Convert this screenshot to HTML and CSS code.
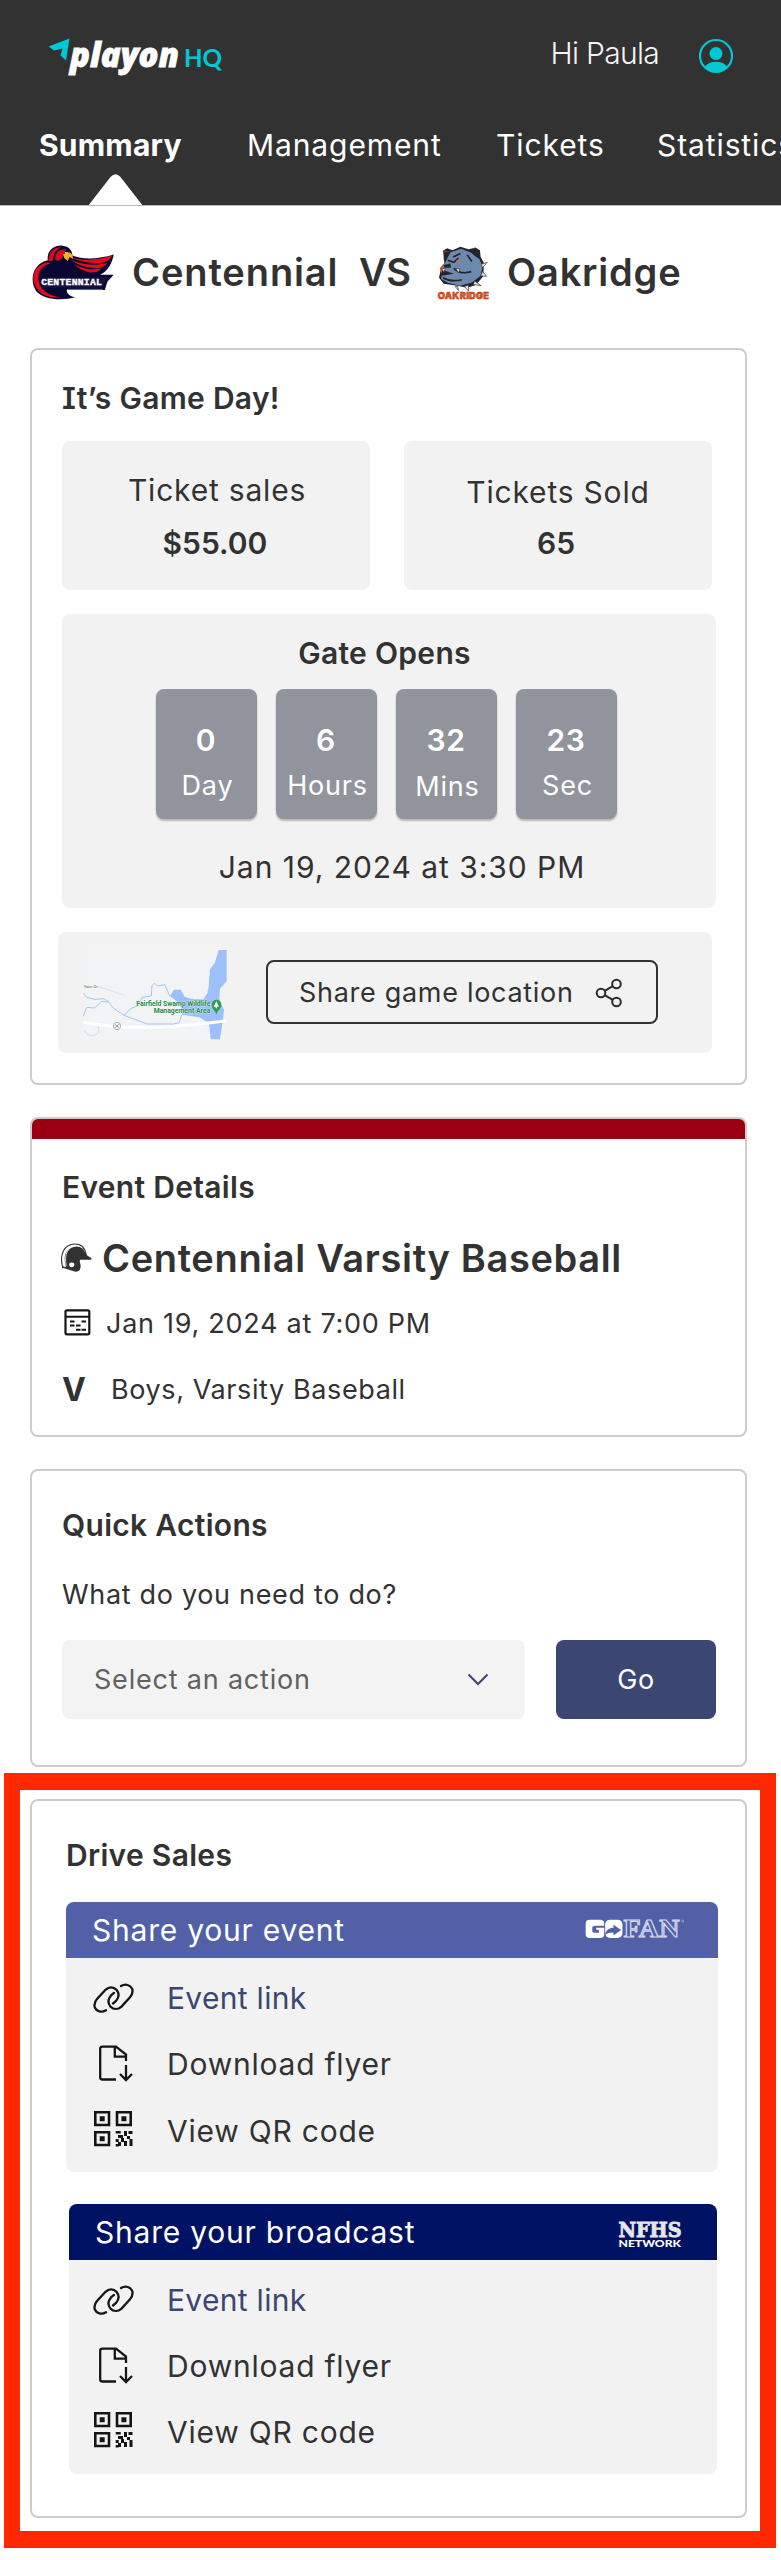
FILE: index.html
```html
<!DOCTYPE html>
<html lang="en">
<head>
<meta charset="utf-8">
<title>PlayOn HQ - Summary</title>
<link rel="stylesheet" href="styles.css">
</head>
<body>
<svg class="defs" aria-hidden="true">
  <symbol id="i-link" viewBox="0 0 41 30">
    <g fill="none" stroke="#151515" stroke-width="2.3" stroke-linecap="round">
      <path d="M13 27.3C8.5 30 3.5 28.500 1.800 24.500C.8 21 2.200 18 4.200 15.800L12.500 6.800C16 3.600 20.500 3.800 23.500 6.800C26.500 10.500 26 14.500 23 18L20 20.500"/>
      <path d="M13 27.3C8.5 30 3.5 28.500 1.800 24.500C.8 21 2.200 18 4.200 15.800L12.500 6.800C16 3.600 20.500 3.800 23.500 6.800C26.500 10.500 26 14.500 23 18L20 20.500" transform="rotate(180 20.5 15.2)"/>
    </g>
  </symbol>
  <symbol id="i-file" viewBox="0 0 36 37">
    <path d="M18 34.500H4.500Q2.200 34.500 2.200 32.500V3.500Q2.200 1.600 4.500 1.600H18L28 9.500V16M16.800 1.600V11.700H28M28 20V34.500M22 29L28 35L34 29" fill="none" stroke="#151515" stroke-width="2.300"/>
  </symbol>
  <symbol id="i-qr" viewBox="0 0 39 36">
    <g fill="none" stroke="#151515" stroke-width="2.600">
      <path d="M1.300 1.300h13.700v12.700H1.300zM23 1.300h13.700v12.700H23zM1.300 21.300h13.700v12.700H1.300z"/>
    </g>
    <path fill="#151515" d="M5.700 5.200h5v5h-5zM27.400 5.200h5v5h-5zM5.700 25.200h5v5h-5zM21.700 20h5v2.500h-5zM30 20h3v5h-3zM34.500 20h4v3h-4zM24 24h5v3h-5zM33 25h3v3h-3zM21.700 28h3v3h-3zM27 27h3v4h-3zM35.500 28h3v7h-3zM24 31h3v4h-3zM21.700 33h3v2.500h-3zM30 30h3v5h-3z"/>
  </symbol>
</svg>

<header class="header">
  <div class="topbar">
    <svg class="logo" viewBox="48 36 176 44">
      <path d="M48.500 46.500L69.500 38.500L66 60.500L60.500 55.500L62.500 48.500L54 50.500Z" fill="#00c8d4"/>
      <text x="70" y="66.500" class="logo-name" textLength="109" lengthAdjust="spacingAndGlyphs">playon</text>
      <text x="184" y="66.500" class="logo-hq" textLength="38" lengthAdjust="spacingAndGlyphs">HQ</text>
    </svg>
    <span class="greeting">Hi Paula</span>
    <svg class="avatar" viewBox="0 0 36 36">
      <circle cx="18" cy="18" r="16" fill="none" stroke="#00c8d4" stroke-width="2.200"/>
      <circle cx="18" cy="15.500" r="6.500" fill="#00c8d4"/>
      <path d="M6.500 29C9 25.500 13 23.800 18 23.800S27 25.500 29.500 29C26 32.500 22 34 18 34S10 32.500 6.500 29Z" fill="#00c8d4"/>
    </svg>
  </div>
  <nav class="nav">
    <a class="tab tab-active">Summary</a>
    <a class="tab tab-mgmt">Management</a>
    <a class="tab tab-tick">Tickets</a>
    <a class="tab">Statistics</a>
  </nav>
  <svg class="pointer" viewBox="0 0 56 32"><path d="M0 32L22.500 3Q27.500-2.500 32.500 3L55 32Z" fill="#fff"/></svg>
</header>

<div class="matchup">
  <svg class="team-a" viewBox="33 44 250 166">
    <path d="M82 90C78 64 98 44 126 46C146 48 156 60 156 76C190 90 240 86 281 73C276 100 262 124 240 134L281 134L262 154L254 180L140 178C136 188 148 200 166 202C120 214 66 208 46 182C26 150 36 100 82 90Z" fill="#0a0632"/>
    <path d="M84 92C84 66 100 50 124 51C104 58 100 72 96 92ZM104 88C104 68 114 58 136 56L126 84L112 92Z" fill="#d60a1e"/>
    <path d="M152 82C196 94 240 88 276 76C270 88 262 94 246 98C216 100 182 96 152 82ZM152 88C180 104 220 108 262 98C250 112 240 114 224 114C196 112 168 104 152 88ZM158 98C180 114 210 122 244 114C236 124 226 128 212 127C190 122 172 114 158 98Z" fill="#e00b1c"/>
    <path d="M82 96C40 104 28 142 48 174C62 198 92 206 122 202C88 198 66 184 58 164C46 134 58 108 90 100Z" fill="#e00b1c"/>
    <path d="M128 72L142 66Q158 66 158 86L148 80L142 92L132 84Z" fill="#f7b021"/>
    <path d="M132 64l12 4-8 2z" fill="#fff"/>
    <path d="M60 142H262L256 152L248 172H66Z" fill="#17143f"/>
    <path d="M150 178H248" stroke="#5a6798" stroke-width="3"/>
    <text x="62" y="166" class="crest-a" textLength="184" lengthAdjust="spacingAndGlyphs">CENTENNIAL</text>
  </svg>
  <span class="team team-home">Centennial</span>
  <span class="team vs">VS</span>
  <svg class="team-b" viewBox="1250 46 158 160">
    <path d="M1268 60L1280 52L1296 58L1320 48L1346 56L1364 50L1378 58L1380 78L1390 96L1388 136L1366 162L1340 170L1310 164L1270 158L1256 140L1262 112L1272 96Z" fill="#22242c"/>
    <path d="M1272 62L1290 60L1272 80ZM1348 54L1362 52L1374 66L1362 64ZM1258 112L1268 100L1264 128Z" fill="#e8511a"/>
    <path d="M1290 64L1322 54L1352 66L1376 84L1386 106L1380 134L1354 154L1318 164L1284 156L1262 144L1264 134L1300 128L1276 120L1264 112L1276 92Z" fill="#6d89ad"/>
    <path d="M1282 88L1300 94L1314 82M1298 78L1320 68M1300 112Q1320 132 1352 122M1268 140Q1290 154 1324 146M1340 72L1354 92" fill="none" stroke="#22242c" stroke-width="5"/>
    <path d="M1344 56L1366 52L1378 62L1374 82L1360 72ZM1272 64L1292 60L1284 74L1270 88Z" fill="#22242c"/>
    <path d="M1270 102L1290 98L1292 110L1272 110Z" fill="#2a2525"/>
    <path d="M1306 88l12-3-3 8z" fill="#f36a1c"/>
    <path d="M1264 112l6 12 5-11zM1306 112l8 14 4-12zM1382 100L1400 94L1386 110ZM1386 122L1398 136L1380 134ZM1362 150L1382 164L1358 160ZM1344 162L1344 180L1332 166ZM1312 166L1314 178L1304 166Z" fill="#e5e7ea" stroke="#33353b" stroke-width="2"/>
    <text x="1252" y="203" class="crest-b" textLength="154" lengthAdjust="spacingAndGlyphs">OAKRIDGE</text>
  </svg>
  <span class="team team-away">Oakridge</span>
</div>

<section class="card game-day">
  <h2 class="h2 cv">It’s Game Day!</h2>
  <div class="stats">
    <div class="stat"><p class="t30">Ticket sales</p><p class="t30 strong">$55.00</p></div>
    <div class="stat stat-low"><p class="t30">Tickets Sold</p><p class="t30 strong">65</p></div>
  </div>
  <div class="gate">
    <h2 class="h2">Gate Opens</h2>
    <div class="tiles">
      <div class="tile"><b>0</b><span>Day</span></div>
      <div class="tile"><b>6</b><span>Hours</span></div>
      <div class="tile tile-low"><b>32</b><span>Mins</span></div>
      <div class="tile"><b>23</b><span>Sec</span></div>
    </div>
    <p class="t30 gate-date">Jan 19, 2024 at 3:30 PM</p>
  </div>
  <div class="location">
    <svg class="map" viewBox="70 60 430 270">
      <path d="M70 60H500V330H70Z" fill="#f1f3f4"/>
      <path d="M476 60H500V154L480 176L478 208L492 240L489 270L480 328H452L447 280L418 262L368 254L360 222L330 198L342 179H362L374 200L392 206L430 208L442 190L446 170L450 118L464 100Z" fill="#9dc0fa"/>
      <path d="M70 190L80 202L104 208L132 206L144 214L160 234L192 256L262 282H340L358 278L364 256L376 246M70 258L80 232L104 234L124 214L146 216M192 256L212 236L236 226L246 202L274 198L276 166L284 160L292 168L314 164L330 200" fill="none" stroke="#a4c4f8" stroke-width="3"/>
      <path d="M116 170L194 196" stroke="#e4e4e6" stroke-width="4"/>
      <path d="M72 300L82 314L102 318L116 308V288" fill="none" stroke="#dedee0" stroke-width="3"/>
      <path d="M70 277Q170 296 290 292Q400 286 500 272" fill="none" stroke="#fff" stroke-width="9"/>
      <circle cx="171" cy="288" r="11" fill="#f5f6f6" stroke="#8c9196" stroke-width="2"/>
      <path d="M165 283l12 10m0-10l-12 10" stroke="#6f7479" stroke-width="2"/>
      <text x="71" y="175" class="map-road" textLength="43" lengthAdjust="spacingAndGlyphs">Yarn Dr</text>
      <text x="229" y="228" class="map-area" textLength="222" lengthAdjust="spacingAndGlyphs">Fairfield Swamp Wildlife</text>
      <text x="281" y="248" class="map-area" textLength="170" lengthAdjust="spacingAndGlyphs">Management Area</text>
      <path d="M469 253C466 240 455 238 455 224A14.500 14.500 0 0 1 484 224C484 238 472 240 469 253Z" fill="#2f9e50"/>
      <path d="M469 214L477 230H471V235H467V230H461Z" fill="#fff"/>
    </svg>
    <button class="share-btn">Share game location
      <svg class="share-icon" viewBox="0 0 26 30"><g fill="none" stroke="#2b2b2b" stroke-width="2"><circle cx="20.500" cy="6" r="4.300"/><circle cx="5" cy="15" r="4.300"/><circle cx="20.500" cy="24" r="4.300"/><path d="M8.700 12.800L16.800 8.200M8.700 17.200L16.800 21.800"/></g></svg>
    </button>
  </div>
</section>

<section class="card details">
  <div class="bar"></div>
  <h2 class="h2">Event Details</h2>
  <div class="row title-row">
    <svg class="helmet" viewBox="20 24 93 92">
      <path d="M25 102C12 58 30 27 62 27C84 27 94 42 96 62" fill="none" stroke="#323232" stroke-width="3.500"/>
      <path d="M34 98C32 86 29 76 31 64C36 36 70 26 86 42C93 50 92 62 112 70V75H78C74 82 80 88 79 98C78 110 68 114 58 111L22 99L24 95Z" fill="#323232"/>
      <ellipse cx="52" cy="91" rx="8" ry="7" fill="#fff"/>
      <path d="M35 94C28 60 38 36 66 32" fill="none" stroke="#fff" stroke-width="2.500"/>
    </svg>
    <h1 class="event-title">Centennial Varsity Baseball</h1>
  </div>
  <div class="row date-row">
    <svg class="calendar" viewBox="0 0 27 27"><rect x="1.500" y="1.300" width="23.800" height="24" rx="1.500" fill="none" stroke="#151515" stroke-width="2.200"/><path d="M1.500 7.800H25.300M6 12.500h4.500M17.500 12.500h4.500M6 16.500h4.500M12 16.500h4.500M12 20.800h4.500M17.500 20.800h4.500" stroke="#151515" stroke-width="2"/></svg>
    <span>Jan 19, 2024 at 7:00 PM</span>
  </div>
  <div class="row level-row"><b class="level">V</b><span>Boys, Varsity Baseball</span></div>
</section>

<section class="card quick">
  <h2 class="h2">Quick Actions</h2>
  <p class="prompt">What do you need to do?</p>
  <div class="controls">
    <div class="select">Select an action<svg class="chevron" viewBox="0 0 22 13"><path d="M1.500 1.500L11 11L20.500 1.500" fill="none" stroke="#3c4672" stroke-width="2"/></svg></div>
    <button class="go">Go</button>
  </div>
</section>

<div class="highlight">
  <section class="card sales">
    <h2 class="h2">Drive Sales</h2>
    <div class="panel">
      <div class="panel-head gofan-head"><span>Share your event</span>
        <svg class="gofan" viewBox="14 58 302 60">
          <rect x="16" y="60" width="56" height="55" rx="12" fill="#fff"/>
          <path d="M74 78H46Q36 78 36 84V94Q36 99 42 99H56V90H48V84H74Z" fill="#5261a7"/>
          <rect x="75" y="60" width="52" height="55" rx="14" fill="#fff"/>
          <path d="M73 106Q80 84 100 84V75L123 91L100 108V99Q86 98 73 106Z" fill="#5261a7"/>
          <text x="130" y="113" class="fan" textLength="170" lengthAdjust="spacingAndGlyphs">FAN</text>
          <circle cx="309" cy="64" r="3" fill="none" stroke="#c9cfe8" stroke-width="1.500"/>
        </svg>
      </div>
      <div class="item"><svg class="i-link"><use href="#i-link"/></svg><a class="link">Event link</a></div>
      <div class="item item-file"><svg class="i-file"><use href="#i-file"/></svg><span>Download flyer</span></div>
      <div class="item item-qr"><svg class="i-qr"><use href="#i-qr"/></svg><span>View QR code</span></div>
    </div>
    <div class="panel panel-b">
      <div class="panel-head nfhs-head"><span>Share your broadcast</span>
        <svg class="nfhs" viewBox="0 0 64 26">
          <text x="0.500" y="15" class="nfhs-a" textLength="63" lengthAdjust="spacingAndGlyphs">NFHS</text>
          <text x="0.500" y="25" class="nfhs-b" textLength="62.500" lengthAdjust="spacingAndGlyphs">NETWORK</text>
        </svg>
      </div>
      <div class="item"><svg class="i-link"><use href="#i-link"/></svg><a class="link">Event link</a></div>
      <div class="item item-file"><svg class="i-file"><use href="#i-file"/></svg><span>Download flyer</span></div>
      <div class="item item-qr"><svg class="i-qr"><use href="#i-qr"/></svg><span>View QR code</span></div>
    </div>
  </section>
</div>
</body>
</html>
```
FILE: styles.css
```css
* { box-sizing: border-box; margin: 0; padding: 0; }
html { overflow: hidden; }
body {
  width: 781px; height: 2560px; overflow: hidden; background: #fff; color: #323232;
  font: 400 27px/32px Inter, "Liberation Sans", sans-serif; letter-spacing: .7px;
}
svg { display: block; flex: none; overflow: visible; }
.defs { position: absolute; width: 0; height: 0; overflow: hidden; }
button { font: inherit; letter-spacing: inherit; color: inherit; }

.header { position: relative; height: 206px; background: #323232; color: #fff; border-bottom: 1px solid #b9b9b9; overflow: hidden; }
.topbar { display: flex; align-items: flex-start; height: 127px; padding: 35px 48px 0; }
.logo { width: 176px; height: 44px; margin-top: 1px; }
.logo-name { font: italic 800 34px "Open Sans", sans-serif; letter-spacing: 0; fill: #fff; stroke: #fff; stroke-width: .8px; }
.logo-hq { font: 700 25px Lato, sans-serif; letter-spacing: 0; fill: #00c8d4; }
.greeting { margin-left: auto; font-size: 30px; line-height: 36px; font-weight: 300; letter-spacing: -.7px; color: #f4f4f4; }
.avatar { width: 36px; height: 36px; margin: 3px -1px 0 39px; }
.nav { display: flex; padding-left: 39px; font-size: 30px; line-height: 36px; letter-spacing: .9px; white-space: nowrap; }
.tab { flex: none; }
.tab-active { width: 208px; font-weight: 700; letter-spacing: .2px; }
.tab-mgmt { width: 249px; }
.tab-tick { width: 161px; }
.pointer { position: absolute; left: 88px; top: 174px; width: 56px; height: 32px; }

.matchup { display: flex; align-items: center; height: 142px; padding: 0 0 10px 31px; }
.team-a { width: 84px; height: 55px; margin-bottom: -1px; }
.team { font-size: 38px; line-height: 46px; font-weight: 600; letter-spacing: .9px; }
.team-home { margin-left: 17px; width: 227px; }
.vs { letter-spacing: -.5px; width: 78px; }
.team-b { width: 53px; height: 54px; margin-bottom: -1px; }
.team-away { margin-left: 17px; letter-spacing: .8px; }
.crest-a { font: 700 28px "Liberation Mono", monospace; fill: #fff; stroke: #fff; }
.crest-b { font: 900 26px Inter, sans-serif; fill: #f4511c; stroke: #8a2b0a; stroke-width: 1px; }

.card { width: 717px; margin-left: 30px; border: 2px solid #ccc; border-radius: 8px; padding: 0 29px; background: #fff; overflow: hidden; }
.h2 { padding-left: 1px; font-size: 30px; line-height: 36px; font-weight: 600; letter-spacing: .3px; white-space: nowrap; }
.cv { letter-spacing: .3px; font-feature-settings: "cv08"; }
.t30 { font-size: 30px; line-height: 36px; letter-spacing: .8px; white-space: nowrap; }
.strong { font-weight: 600; letter-spacing: 0; }

.game-day { height: 737px; padding-top: 30px; }
.stats { display: flex; gap: 34px; margin: 25px 0 0 1px; }
.stat { width: 308px; height: 149px; padding: 31px 0 0 2px; border-radius: 8px; background: #f2f2f2; text-align: center; }
.stat .strong { margin-top: 17px; padding-right: 4px; }
.stat-low { padding: 33px 0 0; }
.stat-low .strong { margin-top: 15px; }
.gate { width: 654px; height: 294px; margin: 24px 0 0 1px; padding-top: 21px; border-radius: 8px; background: #f2f2f2; text-align: center; }
.gate .h2 { padding: 0 9px 0 0; }
.tiles { display: flex; justify-content: center; gap: 19px; margin-top: 18px; padding-right: 6px; }
.tile { display: flex; flex-direction: column; align-items: center; width: 101px; height: 130px; padding-top: 33px; border-radius: 8px; background: #91949d; color: #fff; box-shadow: 0 2px 2px rgba(0,0,0,.25); }
.tile b { font-size: 30px; line-height: 36px; font-weight: 600; }
.tile span { margin: 12px -3px 0 0; letter-spacing: .8px; }
.tile-low span { margin-top: 13px; }
.gate-date { margin-top: 30px; padding-left: 26px; letter-spacing: .95px; }
.location { display: flex; width: 654px; height: 121px; margin: 24px 0 0 -3px; padding: 18px 0 0 25px; border-radius: 8px; background: #f2f2f2; }
.map { width: 144px; height: 90px; }
.map-road { font: 400 12px Roboto, sans-serif; letter-spacing: 0; fill: #6c6c6c; }
.map-area { font: 700 19px Roboto, sans-serif; letter-spacing: 0; fill: #1f8a48; stroke: #fff; stroke-width: 1.500px; paint-order: stroke; }
.share-btn { display: flex; align-items: center; width: 392px; height: 64px; margin: 10px 0 0 39px; padding: 1px 0 0 31px; border: 2px solid #323232; border-radius: 8px; background: none; letter-spacing: .7px; white-space: nowrap; }
.share-icon { width: 26px; height: 30px; margin-left: 22px; }

.details { height: 320px; margin-top: 32px; }
.bar { height: 20px; margin: 0 -29px 30px; background: #9b0012; }
.row { display: flex; align-items: center; white-space: nowrap; }
.title-row { margin-top: 30px; height: 46px; }
.helmet { width: 31px; height: 30px; }
.event-title { margin-left: 10px; font-size: 38px; line-height: 46px; font-weight: 600; letter-spacing: .65px; }
.date-row { margin-top: 27px; padding-left: 3px; letter-spacing: .73px; }
.calendar { width: 27px; height: 27px; margin: -4px 15px 0 0; }
.level-row { margin-top: 34px; letter-spacing: .6px; }
.level { width: 50px; padding-left: 1px; font-size: 32px; font-weight: 700; }

.quick { height: 298px; margin-top: 32px; padding-top: 36px; }
.prompt { margin-top: 36px; padding-left: 1px; letter-spacing: .68px; }
.controls { display: flex; gap: 31px; margin: 29px 0 0 1px; }
.select { display: flex; align-items: center; justify-content: space-between; width: 463px; height: 79px; padding: 0 36px 0 32px; border-radius: 8px; background: #f3f3f3; color: #616161; letter-spacing: .8px; }
.chevron { width: 22px; height: 13px; }
.go { width: 160px; height: 79px; border: 0; border-radius: 8px; background: #3c4672; color: #fff; }

.highlight { width: 772px; height: 775px; margin: 6px 0 0 4px; padding: 9px 0 0 10px; border: solid #ff2800; border-width: 17px 16px; }
.sales { height: 719px; margin-left: 0; padding: 36px 0 0 34px; }
.panel { width: 652px; height: 270px; margin-top: 29px; border-radius: 8px; background: #f2f2f2; overflow: hidden; font-size: 30px; line-height: 36px; letter-spacing: .77px; }
.sales .h2 { padding-left: 0; }
.panel-b { width: 648px; margin: 32px 0 0 3px; }
.panel-head { display: flex; align-items: center; justify-content: space-between; height: 56px; padding-left: 26px; color: #fff; }
.gofan-head { background: #5261a7; padding-right: 33px; }
.nfhs-head { background: #001264; padding-right: 35px; }
.gofan { width: 100px; height: 20px; margin-top: -2px; }
.fan { font: 700 78px "Liberation Serif", serif; fill: none; stroke: #d3d8ec; stroke-width: 3.500px; }
.nfhs { width: 64px; height: 26px; margin-top: 5px; }
.nfhs-a { font: 700 20px "DejaVu Serif", serif; letter-spacing: 0; fill: #e6e6e6; stroke: #e6e6e6; stroke-width: .9px; }
.nfhs-b { font: 900 9.800px Lato, sans-serif; letter-spacing: 0; fill: #fff; }
.item { display: grid; grid-template-columns: 74px 1fr; align-items: center; height: 36px; margin-top: 22px; padding-left: 27px; }
.item-file { margin-top: 29px; }
.item-qr { margin-top: 32px; }
.panel-b .item { padding-left: 24px; }
.panel-b .item-qr { margin-top: 31px; }
.link { color: #3c4672; letter-spacing: .3px; }
.i-link { width: 41px; height: 30px; }
.i-file { width: 36px; height: 37px; margin-left: 5px; }
.i-qr { width: 39px; height: 36px; margin: -4px 0 0 1px; }
```
